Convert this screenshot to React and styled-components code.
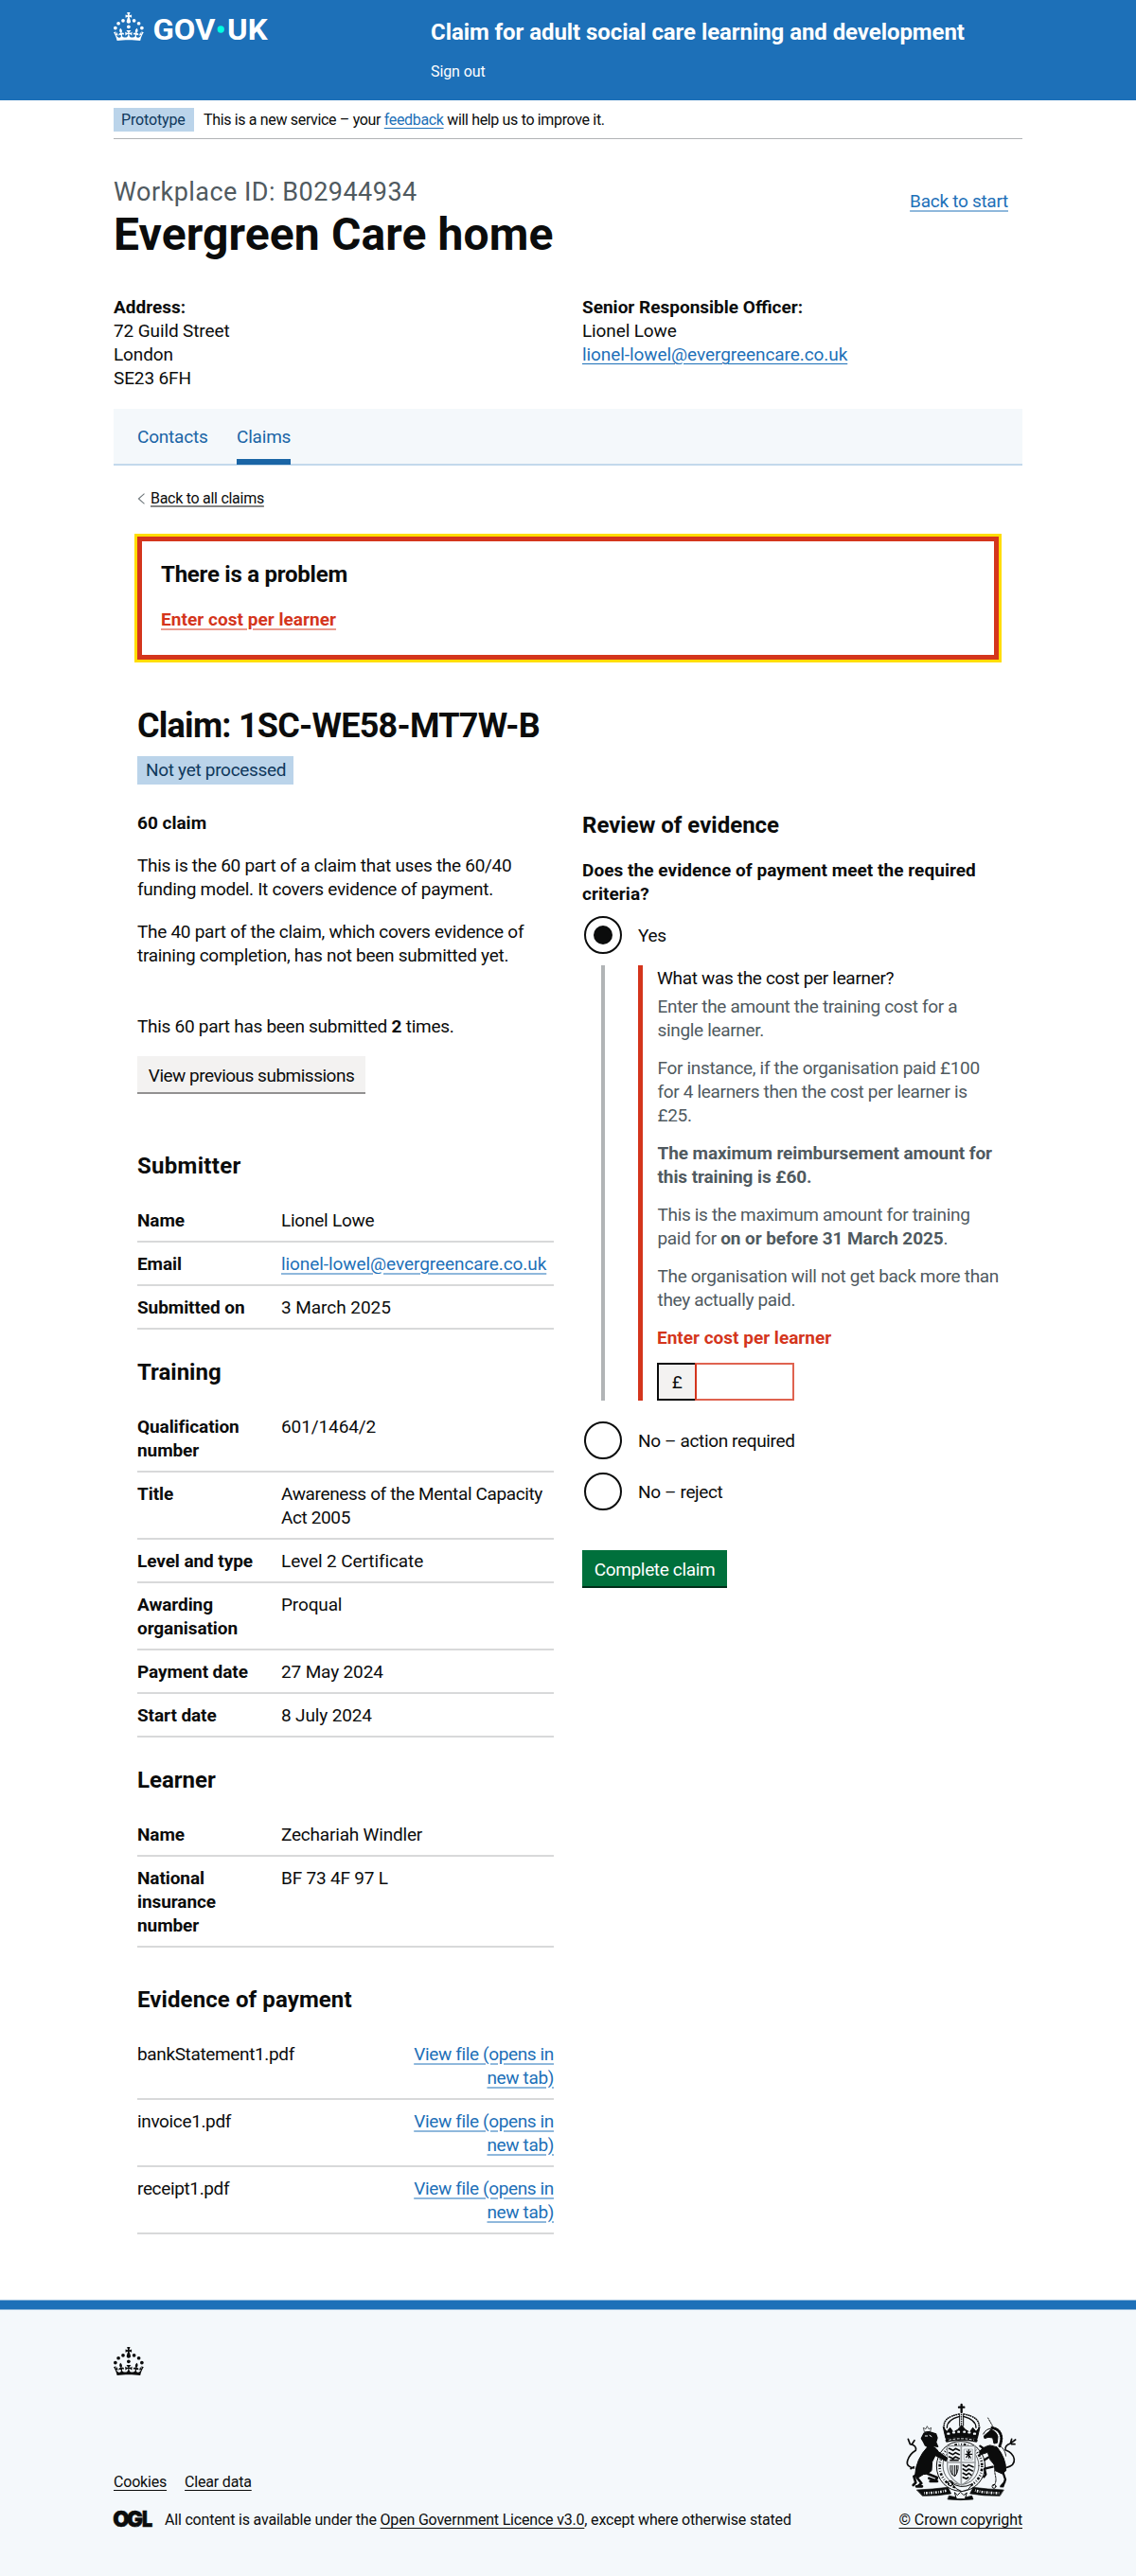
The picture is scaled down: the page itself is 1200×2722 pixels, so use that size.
import React from "react";
import styled, { createGlobalStyle, css } from "styled-components";

const Global = createGlobalStyle`
  *, *::before, *::after { box-sizing: border-box; }
  html, body { margin: 0; padding: 0; background: #fff; }
  body {
    font-family: Roboto, "Liberation Sans", sans-serif;
    font-size: 19px;
    line-height: 25px;
    letter-spacing: -0.28px;
    color: #0b0c0c;
    white-space: nowrap;
  }
  h1, h2, h3, p, dl, dd, dt, ul { margin: 0; padding: 0; font-weight: 400; }
`;

const tracking = (fallback) => css`
  letter-spacing: ${(p) => (p.$ls === undefined ? fallback : `${p.$ls}px`)};
`;

const Container = styled.div`
  width: 960px;
  margin: 0 auto;
`;

const Link = styled.a`
  color: ${(p) => p.$color || "#1d70b8"};
  text-decoration: underline;
  text-decoration-thickness: ${(p) => (p.$soft ? "2px" : "1px")};
  text-decoration-color: ${(p) => p.$soft || "currentColor"};
  text-underline-offset: ${(p) => p.$offset || 3}px;
  ${tracking("inherit")}
`;

/* ---------- header ---------- */

const Header = styled.header`
  height: 106px;
  background: #1d70b8;
  color: #fff;
`;

const HeaderRow = styled(Container)`
  display: flex;
`;

const LogoSlot = styled.div`
  width: 335px;
  padding-top: 8px;
  line-height: 0;
`;

const HeaderContent = styled.div`
  padding-top: 19px;
`;

const ServiceName = styled.div`
  font-size: 24px;
  line-height: 30px;
  font-weight: 700;
  letter-spacing: -0.07px;
`;

const SignOut = styled.div`
  margin-top: 17px;
  font-size: 16px;
  line-height: 20px;
  letter-spacing: -0.1px;
`;

/* ---------- phase banner ---------- */

const PhaseBanner = styled.div`
  display: flex;
  gap: 10px;
  padding: 8px 0 7px;
  border-bottom: 1px solid #b1b4b6;
  font-size: 16px;
  line-height: 25px;
  letter-spacing: -0.34px;
`;

const PhaseTag = styled.strong`
  width: 85px;
  padding-left: 8px;
  background: #bbd4ea;
  color: #0f385c;
  font-weight: 400;
  letter-spacing: -0.15px;
`;

/* ---------- workplace heading ---------- */

const TitleRow = styled.div`
  display: flex;
  justify-content: space-between;
  margin-top: 41px;
  padding-right: 15px;
`;

const Caption = styled.div`
  font-size: 27px;
  line-height: 30px;
  color: #505a5f;
  letter-spacing: 0.47px;
`;

const PageTitle = styled.h1`
  margin-top: 5px;
  font-size: 48px;
  line-height: 50px;
  font-weight: 700;
  letter-spacing: 0.12px;
`;

const StartLink = styled.div`
  padding-top: 12px;
`;

const TwoColumns = styled.div`
  display: grid;
  grid-template-columns: ${(p) => p.$cols};
  column-gap: ${(p) => p.$gap || 0}px;
  margin-top: ${(p) => p.$top}px;
`;

const Contact = styled.div`
  letter-spacing: -0.12px;
`;

const Strong = styled.strong`
  font-weight: 700;
  ${tracking("0")}
`;

/* ---------- sub navigation ---------- */

const SubNav = styled.nav`
  display: flex;
  gap: 30px;
  height: 60px;
  margin-top: 20px;
  padding-left: 25px;
  background: #f4f8fb;
  box-shadow: inset 0 -2px 0 #c3d9ec;
  letter-spacing: -0.2px;
`;

const SubNavItem = styled.a`
  width: ${(p) => p.$w}px;
  height: 59px;
  padding-top: 17px;
  color: #1a65a6;
  border-bottom: 6px solid ${(p) => (p.$current ? "#1a65a6" : "transparent")};
`;

const Panel = styled.main`
  padding: 25px 25px 69px;
`;

const BackLink = styled.div`
  display: flex;
  align-items: center;
  gap: 6px;
  font-size: 16px;
  line-height: 20px;
`;

/* ---------- error summary ---------- */

const ErrorSummary = styled.section`
  height: 130px;
  margin-top: 30px;
  padding: 20px;
  border: 5px solid #d4351c;
  outline: 3px solid #ffdd00;
`;

const Heading = styled.h3`
  margin-top: ${(p) => p.$top || 0}px;
  font-size: 24px;
  line-height: 30px;
  font-weight: 700;
  ${tracking("0")}
`;

const ErrorItem = styled.p`
  margin-top: 20px;
  font-weight: 700;
  letter-spacing: 0.04px;
`;

/* ---------- claim ---------- */

const ClaimTitle = styled.h2`
  margin-top: 50px;
  font-size: 36px;
  line-height: 40px;
  font-weight: 700;
  letter-spacing: -0.75px;
`;

const StatusTag = styled.div`
  width: 165px;
  margin-top: 12px;
  padding-left: 9px;
  background: #bbd4ea;
  color: #0f385c;
  line-height: 30px;
  letter-spacing: -0.3px;
`;

const Paragraph = styled.p`
  margin-top: ${(p) => p.$top}px;
`;

const Button = styled.button`
  display: block;
  width: ${(p) => p.$w}px;
  height: 38px;
  margin: ${(p) => p.$top}px 0 0;
  padding: 8px 0 5px;
  border: 0;
  font: inherit;
  text-align: center;
  ${tracking("inherit")}
  ${(p) =>
    p.$primary
      ? css`
          background: #00703c;
          color: #fff;
          box-shadow: 0 2px 0 #002d18;
        `
      : css`
          background: #f3f2f1;
          color: #0b0c0c;
          box-shadow: 0 2px 0 #929191;
        `}
`;

const SummaryList = styled.dl`
  margin-top: 20px;
`;

const SummaryRow = styled.div`
  display: flex;
  padding: 10px 0 9px;
  border-bottom: 2px solid #d8d9da;
`;

const Key = styled.dt`
  width: 152px;
  font-weight: 700;
  letter-spacing: -0.08px;
  white-space: pre-line;
`;

const Value = styled.dd`
  white-space: pre-line;
  ${tracking("-0.14px")}
`;

const FileRow = styled(SummaryRow)`
  justify-content: space-between;
  letter-spacing: -0.36px;
  text-align: right;
`;

/* ---------- review form ---------- */

const Question = styled.p`
  margin-top: 20px;
  font-weight: 700;
  letter-spacing: 0.05px;
`;

const RadioRow = styled.label`
  display: flex;
  align-items: center;
  gap: 17px;
  height: 44px;
  margin-top: ${(p) => p.$top}px;
  padding-left: 2px;
  letter-spacing: -0.36px;
`;

const RadioDisc = styled.span`
  display: grid;
  place-items: center;
  width: 40px;
  height: 40px;
  border: 2px solid #0b0c0c;
  border-radius: 50%;
  &::after {
    content: "";
    width: 20px;
    height: 20px;
    border-radius: 50%;
    background: ${(p) => (p.$on ? "#0b0c0c" : "transparent")};
  }
`;

const Conditional = styled.div`
  height: 460px;
  margin: 10px 0 0 20px;
  padding-left: 35px;
  border-left: 4px solid #b1b4b6;
`;

const ErrorGroup = styled.div`
  height: 460px;
  padding: 1px 0 0 15px;
  border-left: 5px solid #d4351c;
  letter-spacing: -0.33px;
`;

const Hint = styled.p`
  margin-top: ${(p) => p.$top || 15}px;
  padding-left: 0.5px;
  color: #505a5f;
`;

const FieldError = styled.p`
  margin-top: 15px;
  color: #d4351c;
  font-weight: 700;
  letter-spacing: 0;
`;

const MoneyField = styled.div`
  display: flex;
  height: 40px;
  margin-top: 14px;
`;

const Prefix = styled.span`
  width: 40px;
  border: 2px solid #0b0c0c;
  border-right: 0;
  background: #f3f2f1;
  line-height: 37px;
  text-align: center;
`;

const MoneyInput = styled.input`
  width: 105px;
  height: 40px;
  padding: 0;
  border: 2px solid #df6350;
  border-left-color: #d4351c;
  border-radius: 0;
  background: #fff;
`;

/* ---------- footer ---------- */

const Footer = styled.footer`
  height: 292px;
  background: #f4f8fb;
  font-size: 16px;
  line-height: 20px;
  letter-spacing: -0.19px;
`;

const FooterBar = styled.div`
  height: 11px;
  background: #1d70b8;
  border: solid #8cb6da;
  border-width: 1px 0;
`;

const FooterCrown = styled(Container)`
  height: 69px;
  padding-top: 39px;
  line-height: 0;
`;

const FooterMeta = styled(Container)`
  display: flex;
  justify-content: space-between;
  align-items: flex-end;
  height: 163px;
`;

const FooterLinks = styled.div`
  display: flex;
  gap: 19px;
`;

const Licence = styled.div`
  display: flex;
  gap: 12px;
  margin-top: 20px;
`;

const OglMark = styled.svg`
  display: block;
  margin: -7px 0 -7px -2px;
`;

const Copyright = styled.div`
  display: flex;
  flex-direction: column;
  align-items: flex-end;
`;

const CrestSlot = styled.div`
  height: 114px;
  padding-right: 5px;
  line-height: 0;
`;

const CrownShape = () => (
  <g fill="currentColor">
    <circle cx="20" cy="17.6" r="3.7" />
    <circle cx="10.2" cy="23.5" r="3.7" />
    <circle cx="3.7" cy="33.2" r="3.7" />
    <circle cx="31.7" cy="30.6" r="3.7" />
    <circle cx="43.3" cy="17.6" r="3.7" />
    <circle cx="53.2" cy="23.5" r="3.7" />
    <circle cx="59.7" cy="33.2" r="3.7" />
    <path d="M33.1,9.8c.2-.1.3-.3.5-.5l4.6,2.4v-6.8l-4.6,1.5c-.1-.2-.3-.3-.5-.5l1.9-5.9h-6.7l1.9,5.9c-.2.1-.3.3-.5.5l-4.6-1.5v6.8l4.6-2.4c.1.2.3.3.5.5l-2.6,8c-.9,2.8,1.2,5.7,4.1,5.7h0c3,0,5.1-2.9,4.1-5.7l-2.6-8ZM37,37.9s-3.4,3.8-4.1,6.1c2.2,0,4.2-.5,6.4-2.8l-.7,8.5c-2-2.8-4.4-4.1-5.7-3.8.1,3.1.5,6.7,5.8,7.2,3.7.3,6.7-1.5,7-3.8.4-2.6-2-4.3-3.7-1.6-1.4-4.5,2.4-6.1,4.9-3.2-1.9-4.5-1.8-7.7,2.4-10.9,3,4,2.6,7.3-1.2,11.1,2.4-1.3,6.2,0,4,4.6-1.2-2.8-3.7-2.2-4.2.2-.3,1.7.7,3.7,3,4.2,1.9.3,4.7-.9,7-5.9-1.3,0-2.4.7-3.9,1.7l2.4-8c.6,2.3,1.4,3.7,2.2,4.5.6-1.6.5-2.8,0-5.3l5,1.8c-2.6,3.6-5.2,8.7-7.3,17.5-7.4-1.1-15.7-1.7-24.5-1.7h0c-8.8,0-17.1.6-24.5,1.7-2.1-8.9-4.7-13.9-7.3-17.5l5-1.8c-.5,2.5-.6,3.7,0,5.3.8-.8,1.6-2.3,2.2-4.5l2.4,8c-1.5-1-2.6-1.7-3.9-1.7,2.3,5,5.2,6.2,7,5.9,2.3-.4,3.3-2.4,3-4.2-.5-2.4-3-3.1-4.2-.2-2.2-4.6,1.6-6,4-4.6-3.7-3.7-4.2-7.1-1.2-11.1,4.2,3.2,4.3,6.4,2.4,10.9,2.5-2.8,6.3-1.3,4.9,3.2-1.8-2.7-4.1-1-3.7,1.6.3,2.3,3.3,4.1,7,3.8,5.4-.5,5.7-4.2,5.8-7.2-1.3-.2-3.7,1-5.7,3.8l-.7-8.5c2.2,2.3,4.2,2.7,6.4,2.8-.7-2.3-4.1-6.1-4.1-6.1h10.6,0Z" />
  </g>
);

const Logo = () => (
  <svg width="170" height="44" viewBox="0 -10 340 88">
    <CrownShape />
    <g fill="#fff" fontFamily="Roboto, sans-serif" fontWeight="700" fontSize="63" letterSpacing="0">
      <text x="83" y="58" textLength="132" lengthAdjust="spacingAndGlyphs">GOV</text>
      <text x="240" y="58" textLength="85" lengthAdjust="spacingAndGlyphs">UK</text>
    </g>
    <circle cx="226.5" cy="36" r="7.3" fill="#00ffe0" />
  </svg>
);

const Crest = () => (
  <svg width="120" height="105" viewBox="165 115 360 315" fill="none" stroke="#0b0c0c" strokeLinecap="round" strokeLinejoin="round">
    {/* crown */}
    <path d="M347 121v24M339 129h16" strokeWidth="7" />
    <path d="M292 194q-6-34 51-44M402 194q6-34-51-44" strokeWidth="5" strokeDasharray="1 6" />
    <path d="M301 194q0-26 40-36M393 194q0-26-40-36" strokeWidth="4" />
    <path d="M341 150v38M353 150v38" strokeWidth="3" />
    <path d="M347 152v36" strokeWidth="4" strokeDasharray="1 6" />
    <path d="M289 192l8 36q50-12 100 0l8-36-12 14-10-12-10 14-14-8-12-14-12 14-14 8-10-14-10 12z" fill="#0b0c0c" strokeWidth="3" />
    <path d="M304 213h3M321 209h3M337 207h2M355 207h2M370 209h3M387 213h3" stroke="#f4f8fb" strokeWidth="7" />
    <path d="M302 234q45-11 90 0" strokeWidth="12" />
    <path d="M308 233q38-9 78 0" stroke="#f4f8fb" strokeWidth="3" strokeDasharray="6 7" />
    {/* garter and shield */}
    <ellipse cx="345" cy="316" rx="77" ry="79" fill="#f4f8fb" strokeWidth="3" />
    <ellipse cx="345" cy="316" rx="67" ry="69" strokeWidth="8" strokeDasharray="3 5 8 5 2 6" strokeLinecap="butt" />
    <ellipse cx="345" cy="314" rx="57" ry="60" fill="#f4f8fb" strokeWidth="2" />
    <path d="M302 252h88v58q0 44-44 66-44-22-44-66z" fill="#f4f8fb" stroke="#8d9193" strokeWidth="4" />
    <path d="M346 254v118M304 304h86" stroke="#9a9da0" strokeWidth="5" />
    <path d="M308 260l12 6 8-6 12 6M308 273l12 6 8-6 12 6M308 286l12 6 8-6 12 6M312 297h24" strokeWidth="5" />
    <path d="M356 262h26v34h-26z" stroke="#8d9193" strokeWidth="2" />
    <path d="M364 268l12 22M376 268l-14 20M360 278h20M370 264v26" strokeWidth="3.5" />
    <path d="M312 314q-4 26 14 34 12-14 10-34M318 314v28M325 314v32M331 314v26" strokeWidth="3" />
    <path d="M352 312l10 6 8-6 14 6M352 325l10 6 8-6 12 6M352 338l10 6 8-6 8 6M352 351l10 5 6-4" strokeWidth="5" />
    <path d="M312 366q30 26 70 6l-14 18-20 6-16-8z" fill="#f4f8fb" strokeWidth="3" />
    <circle cx="312" cy="370" r="8" strokeWidth="3" />
    {/* lion */}
    <path d="M229 206l-3-12 8 4 4-9 5 9 8-4-3 12z" fill="#f4f8fb" strokeWidth="2" />
    <path d="M228 212q10-8 24-3l14 5 4 12-4 14 6 14-14-2-12 6-14-8-6-12-6-10z" fill="#0b0c0c" strokeWidth="4" />
    <path d="M232 220h7M246 218l6 4" stroke="#f4f8fb" strokeWidth="3" />
    <path d="M240 254q22-6 34 16l28 20-4 10-34-18-10 20-2 28q-14 14-26 12l-16 10-10-8q2-50 40-90z" fill="#0b0c0c" strokeWidth="3" />
    <path d="M212 342l-16 6 6 20-8 8M206 352l14 18-10 8M240 340l30 12-4 10-22-8M204 380h18M248 364h22" strokeWidth="8" />
    <path d="M196 322q-26-4-20-24t26-32q4-16-18-20M184 246l-6-16M190 246l8-12M196 318l-10 6" strokeWidth="5" />
    {/* unicorn */}
    <path d="M431 163l16 28" strokeWidth="3" strokeDasharray="4 4" />
    <path d="M444 194l12 4q12 6 16 20t-4 34" strokeWidth="9" strokeDasharray="3 5" />
    <path d="M442 200q16 6 20 22l-2 20-10 2-4-18-14-2-12 4-2-8 14-12z" fill="#0b0c0c" strokeWidth="3" />
    <path d="M416 214q10-20 26-16" strokeWidth="3" />
    <path d="M436 250q-24 6-32 20l2 10 24-8 8 24 12 14 4 20 22 10 12-10q0-40-28-74z" fill="#0b0c0c" strokeWidth="3" />
    <path d="M420 262l-14-10M432 288l-12 8M446 318l-26 6 4 18-6 8M478 334l8 24-8 22M484 366l-12 14" strokeWidth="7" />
    <path d="M470 252q16 12 18 34M464 300q-16 20-10 44t-6 34" stroke="#0b0c0c" strokeWidth="3" strokeDasharray="5 3" />
    <circle cx="450" cy="380" r="6" strokeWidth="3" />
    <path d="M490 320q26-6 24-26t-28-30q-2-14 16-20M502 244l4-14M504 242l14-10M506 246l10 0" strokeWidth="5" />
    {/* motto scroll */}
    <path d="M206 391q50-2 98-8l10 20q-44 8-90 7z" fill="#0b0c0c" strokeWidth="2" />
    <path d="M480 391q-50-2-96-8l-10 20q44 8 94 7z" fill="#0b0c0c" strokeWidth="2" />
    <path d="M228 401q40 0 72-8M390 393q32 8 76 8" stroke="#f4f8fb" strokeWidth="8" strokeDasharray="2 4 5 4" strokeLinecap="butt" />
    <path d="M308 410q36 10 72 0l4 11q-40 4-80 0z" fill="#0b0c0c" strokeWidth="2" />
    <path d="M326 400l8 8 10-10 10 10 10-8-6 20h-26z" fill="#f4f8fb" strokeWidth="3" />
  </svg>
);

const Ogl = () => (
  <OglMark width="44" height="34" viewBox="-2 -7 44 34">
    <g fill="#0b0c0c" stroke="#0b0c0c" strokeWidth="0.6" fontFamily="Inter, sans-serif" fontWeight="900" fontSize="22.5" letterSpacing="0">
      <text x="-0.8" y="16.5">O</text>
      <text x="14" y="16.5">G</text>
      <text x="30" y="16.5" textLength="11.2" lengthAdjust="spacingAndGlyphs">L</text>
    </g>
  </OglMark>
);

const SUBMITTER = [
  ["Name", "Lionel Lowe", -0.24],
  ["Email", <Link $soft="#8fb8dc">lionel-lowel@evergreencare.co.uk</Link>, -0.07],
  ["Submitted on", "3 March 2025", -0.05],
];
const TRAINING = [
  ["Qualification\nnumber", "601/1464/2", -0.1],
  ["Title", "Awareness of the Mental Capacity\nAct 2005", -0.38],
  ["Level and type", "Level 2 Certificate", -0.1],
  ["Awarding\norganisation", "Proqual"],
  ["Payment date", "27 May 2024"],
  ["Start date", "8 July 2024"],
];
const LEARNER = [
  ["Name", "Zechariah Windler", -0.2],
  ["National\ninsurance\nnumber", "BF 73 4F 97 L", -0.2],
];
const FILES = ["bankStatement1.pdf", "invoice1.pdf", "receipt1.pdf"];

const Summary = ({ rows }) => (
  <SummaryList>
    {rows.map(([key, value, ls]) => (
      <SummaryRow key={key}>
        <Key>{key}</Key>
        <Value $ls={ls}>{value}</Value>
      </SummaryRow>
    ))}
  </SummaryList>
);

const Radio = ({ on, top, children }) => (
  <RadioRow $top={top}>
    <RadioDisc $on={on} />
    {children}
  </RadioRow>
);

export default function App() {
  return (
    <>
      <Global />
      <Header>
        <HeaderRow>
          <LogoSlot><Logo /></LogoSlot>
          <HeaderContent>
            <ServiceName>Claim for adult social care learning and development</ServiceName>
            <SignOut>Sign out</SignOut>
          </HeaderContent>
        </HeaderRow>
      </Header>

      <Container>
        <PhaseBanner>
          <PhaseTag>Prototype</PhaseTag>
          <span>
            This is a new service – your <Link>feedback</Link> will help us to improve it.
          </span>
        </PhaseBanner>

        <TitleRow>
          <div>
            <Caption>Workplace ID: B02944934</Caption>
            <PageTitle>Evergreen Care home</PageTitle>
          </div>
          <StartLink><Link $soft="#8fb8dc">Back to start</Link></StartLink>
        </TitleRow>

        <TwoColumns $cols="495px 1fr" $top={39}>
          <Contact>
            <Strong>Address:</Strong><br />
            72 Guild Street<br />
            London<br />
            SE23 6FH
          </Contact>
          <Contact>
            <Strong>Senior Responsible Officer:</Strong><br />
            Lionel Lowe<br />
            <Link $ls={-0.07}>lionel-lowel@evergreencare.co.uk</Link>
          </Contact>
        </TwoColumns>

        <SubNav>
          <SubNavItem $w={75}>Contacts</SubNavItem>
          <SubNavItem $w={57} $current>Claims</SubNavItem>
        </SubNav>

        <Panel>
          <BackLink>
            <svg width="8" height="12" viewBox="0 0 8 12" fill="none" stroke="#6f777b" strokeWidth="1.1">
              <path d="M7.5 .6L1.4 6l6.1 5.4" />
            </svg>
            <Link $color="#0b0c0c" $soft="#858686" $offset={2}>Back to all claims</Link>
          </BackLink>

          <ErrorSummary>
            <Heading $ls={-0.24}>There is a problem</Heading>
            <ErrorItem><Link $color="#d4351c" $soft="#ea9a8e">Enter cost per learner</Link></ErrorItem>
          </ErrorSummary>

          <ClaimTitle>Claim: 1SC-WE58-MT7W-B</ClaimTitle>
          <StatusTag>Not yet processed</StatusTag>

          <TwoColumns $cols="440px 440px" $gap={30} $top={28}>
            <div>
              <Strong>60 claim</Strong>
              <Paragraph $top={20}>
                This is the 60 part of a claim that uses the 60/40<br />
                funding model. It covers evidence of payment.
              </Paragraph>
              <Paragraph $top={20}>
                The 40 part of the claim, which covers evidence of<br />
                training completion, has not been submitted yet.
              </Paragraph>
              <Paragraph $top={50}>This 60 part has been submitted <Strong>2</Strong> times.</Paragraph>
              <Button $w={241} $top={19} $ls={-0.5}>View previous submissions</Button>

              <Heading $top={63} $ls={0.3}>Submitter</Heading>
              <Summary rows={SUBMITTER} />
              <Heading $top={30}>Training</Heading>
              <Summary rows={TRAINING} />
              <Heading $top={30}>Learner</Heading>
              <Summary rows={LEARNER} />
              <Heading $top={40} $ls={0.1}>Evidence of payment</Heading>
              <SummaryList>
                {FILES.map((file) => (
                  <FileRow key={file}>
                    <dt>{file}</dt>
                    <dd>
                      <Link $soft="#8fb8dc">View file (opens in<br />new tab)</Link>
                    </dd>
                  </FileRow>
                ))}
              </SummaryList>
            </div>

            <div>
              <Heading>Review of evidence</Heading>
              <Question>Does the evidence of payment meet the required<br />criteria?</Question>
              <Radio on top={9}>Yes</Radio>
              <Conditional>
                <ErrorGroup>
                  <div>What was the cost per learner?</div>
                  <Hint $top={5}>Enter the amount the training cost for a<br />single learner.</Hint>
                  <Hint>
                    For instance, if the organisation paid £100<br />
                    for 4 learners then the cost per learner is<br />
                    £25.
                  </Hint>
                  <Hint><Strong $ls={-0.09}>The maximum reimbursement amount for<br />this training is £60.</Strong></Hint>
                  <Hint>
                    This is the maximum amount for training<br />
                    paid for <Strong $ls={-0.09}>on or before 31 March 2025</Strong>.
                  </Hint>
                  <Hint>The organisation will not get back more than<br />they actually paid.</Hint>
                  <FieldError>Enter cost per learner</FieldError>
                  <MoneyField>
                    <Prefix>£</Prefix>
                    <MoneyInput />
                  </MoneyField>
                </ErrorGroup>
              </Conditional>
              <Radio top={20}>No – action required</Radio>
              <Radio top={10}>No – reject</Radio>
              <Button $primary $w={153} $top={40} $ls={-0.35}>Complete claim</Button>
            </div>
          </TwoColumns>
        </Panel>
      </Container>

      <Footer>
        <FooterBar />
        <FooterCrown>
          <svg width="32" height="30" viewBox="0 0 64 60"><CrownShape /></svg>
        </FooterCrown>
        <FooterMeta>
          <div>
            <FooterLinks>
              <Link $color="#0b0c0c">Cookies</Link>
              <Link $color="#0b0c0c">Clear data</Link>
            </FooterLinks>
            <Licence>
              <Ogl />
              <span>
                All content is available under the <Link $color="#0b0c0c">Open Government Licence v3.0</Link>, except where otherwise stated
              </span>
            </Licence>
          </div>
          <Copyright>
            <CrestSlot><Crest /></CrestSlot>
            <Link $color="#0b0c0c" $ls={-0.12}>© Crown copyright</Link>
          </Copyright>
        </FooterMeta>
      </Footer>
    </>
  );
}
